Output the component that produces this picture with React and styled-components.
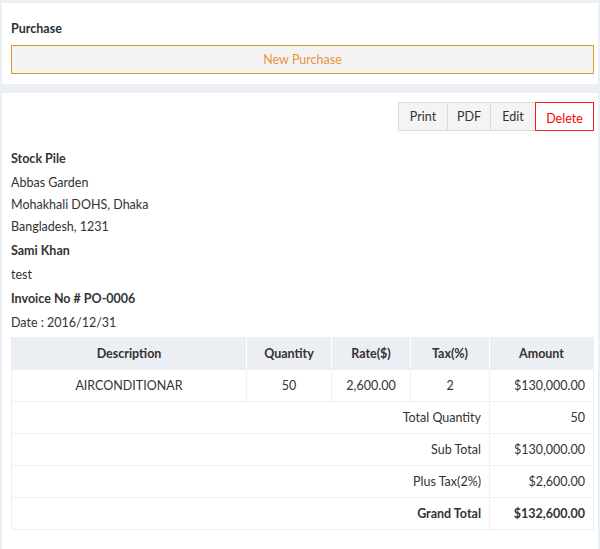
import styled, { createGlobalStyle } from 'styled-components'

const Global = createGlobalStyle`
  html, body { margin: 0; padding: 0; background: #ebeef3; }
  body {
    font-family: 'Lato', 'Liberation Sans', sans-serif;
    font-size: 12.5px;
    color: #333;
  }
  * { box-sizing: border-box; }
`

const Page = styled.div`
  padding: 3px 2px 0 2px;
  display: flex;
  flex-direction: column;
  gap: 9px;
`

const Card = styled.section`
  background: #fff;
  padding: ${({ $pad }) => $pad};
`

const Heading = styled.h3`
  margin: 0 0 7px 0;
  padding-top: 1px;
  font-size: 12.5px;
  font-weight: 700;
  line-height: 18px;
  color: #2b2f36;
`

const WideButton = styled.button`
  display: block;
  width: 100%;
  height: 29px;
  background: #f3f3f3;
  border: 1px solid #e0962e;
  color: #e8933a;
  font-family: inherit;
  font-size: 12.5px;
  cursor: pointer;
`

const Toolbar = styled.div`
  display: flex;
  justify-content: flex-end;
`

const ToolButton = styled.button`
  height: 29px;
  width: ${({ $w }) => $w}px;
  padding: 0;
  padding-top: ${({ $danger }) => ($danger ? 2 : 0)}px;
  background: ${({ $danger }) => ($danger ? '#fff' : '#f4f4f4')};
  border: 1px solid ${({ $danger }) => ($danger ? '#ff1a1a' : '#dcdcdc')};
  margin-left: -1px;
  color: ${({ $danger }) => ($danger ? '#f00' : '#333')};
  font-family: inherit;
  font-size: 12.5px;
  line-height: 27px;
  cursor: pointer;
  position: relative;
  z-index: ${({ $danger }) => ($danger ? 1 : 0)};
`

const Address = styled.div`
  margin-top: 17px;
  display: flex;
  flex-direction: column;
`

const Line = styled.div`
  line-height: 22px;
  font-weight: ${({ $bold }) => ($bold ? 700 : 400)};
  margin-bottom: ${({ $gap }) => $gap || 0}px;
`

const Table = styled.table`
  margin-top: 3px;
  width: 100%;
  border-collapse: collapse;
  table-layout: fixed;
`

const Th = styled.th`
  background: #ebeef3;
  height: 32px;
  font-weight: 700;
  text-align: center;
  border: 1px solid #ebeef3;
  border-right-color: #fff;
  &:last-child { border-right-color: #ebeef3; }
`

const Td = styled.td`
  height: 32px;
  border: 1px solid #eceff3;
  text-align: ${({ $align }) => $align || 'center'};
  padding: 0 8px;
  font-weight: ${({ $bold }) => ($bold ? 700 : 400)};
`

const items = [
  { desc: 'AIRCONDITIONAR', qty: '50', rate: '2,600.00', tax: '2', amount: '$130,000.00' },
]

const totals = [
  { label: 'Total Quantity', value: '50' },
  { label: 'Sub Total', value: '$130,000.00' },
  { label: 'Plus Tax(2%)', value: '$2,600.00' },
  { label: 'Grand Total', value: '$132,600.00', bold: true },
]

export default function App() {
  return (
    <Page>
      <Global />
      <Card $pad="16px 4px 10px 9px">
        <Heading>Purchase</Heading>
        <WideButton>New Purchase</WideButton>
      </Card>

      <Card $pad="9px 4px 21px 9px">
        <Toolbar>
          <ToolButton $w={50}>Print</ToolButton>
          <ToolButton $w={44}>PDF</ToolButton>
          <ToolButton $w={46}>Edit</ToolButton>
          <ToolButton $w={59} $danger>Delete</ToolButton>
        </Toolbar>

        <Address>
          <Line $bold $gap={2}>Stock Pile</Line>
          <Line>Abbas Garden</Line>
          <Line>Mohakhali DOHS, Dhaka</Line>
          <Line $gap={2}>Bangladesh, 1231</Line>
          <Line $bold $gap={2}>Sami Khan</Line>
          <Line $gap={2}>test</Line>
          <Line $bold $gap={2}>Invoice No # PO-0006</Line>
          <Line>Date : 2016/12/31</Line>
        </Address>

        <Table>
          <colgroup>
            <col style={{ width: 235 }} />
            <col style={{ width: 85 }} />
            <col style={{ width: 79 }} />
            <col style={{ width: 79 }} />
            <col style={{ width: 104 }} />
          </colgroup>
          <thead>
            <tr>
              <Th>Description</Th>
              <Th>Quantity</Th>
              <Th>Rate($)</Th>
              <Th>Tax(%)</Th>
              <Th>Amount</Th>
            </tr>
          </thead>
          <tbody>
            {items.map((it) => (
              <tr key={it.desc}>
                <Td>{it.desc}</Td>
                <Td>{it.qty}</Td>
                <Td>{it.rate}</Td>
                <Td>{it.tax}</Td>
                <Td $align="right">{it.amount}</Td>
              </tr>
            ))}
            {totals.map((t) => (
              <tr key={t.label}>
                <Td colSpan={4} $align="right" $bold={t.bold}>{t.label}</Td>
                <Td $align="right" $bold={t.bold}>{t.value}</Td>
              </tr>
            ))}
          </tbody>
        </Table>
      </Card>
    </Page>
  )
}
